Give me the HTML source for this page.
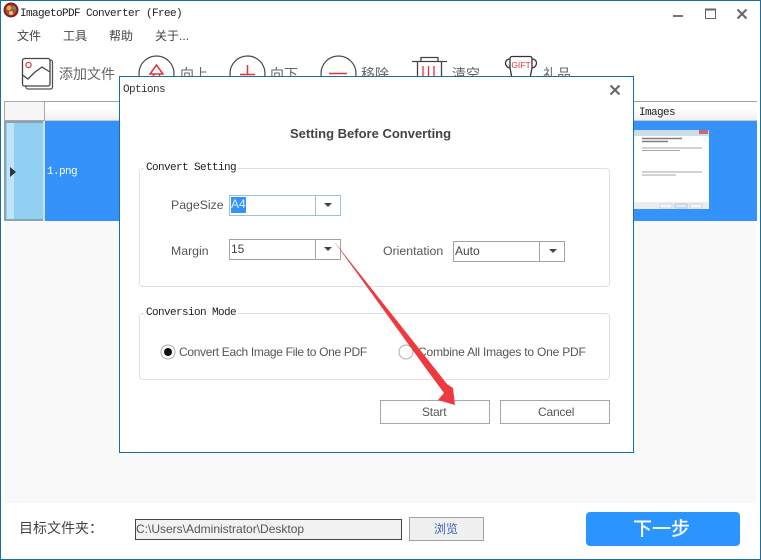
<!DOCTYPE html>
<html><head><meta charset="utf-8">
<style>
html,body{margin:0;padding:0;background:#fff}
#w{position:relative;width:761px;height:560px;overflow:hidden;background:#fff;font-family:"Liberation Sans","Noto Sans CJK SC",sans-serif;color:#555}
#w div,#w svg{position:absolute;box-sizing:border-box}
.t{white-space:nowrap;line-height:1}
.m{font-family:"Liberation Mono","Noto Sans CJK SC",monospace;font-size:11px;letter-spacing:-.6px;color:#222}
.c{font-size:12px;color:#444}
.box{background:#fff;border:1px solid #a3a3a3}
</style></head><body><div id="w">

<!-- window border -->
<div style="left:0;top:0;width:761px;height:560px;border:1px solid #1a6ea8;z-index:9;pointer-events:none"></div>

<!-- logo -->
<svg style="left:3px;top:2px" width="16" height="16" viewBox="0 0 16 16"><circle cx="8" cy="8" r="7.5" fill="#7c1f2a"/><circle cx="8" cy="8" r="5.5" fill="#c8402f"/><circle cx="6" cy="6" r="2.4" fill="#e3b13c"/><circle cx="11" cy="6" r="1.8" fill="#4f9e58"/><circle cx="8" cy="11" r="2" fill="#e7d16a"/><circle cx="4.500" cy="10" r="1.300" fill="#3f6cb0"/></svg>
<div class="t m" style="left:20px;top:9px">ImagetoPDF Converter (Free)</div>

<!-- window controls -->
<svg style="left:670px;top:6px" width="82" height="16" viewBox="0 0 82 16"><path d="M3 10H13" stroke="#777" stroke-width="2"/><rect x="35.500" y="3.500" width="10" height="9" fill="none" stroke="#666"/><path d="M35 3.500H46" stroke="#666" stroke-width="2"/><path d="M67.500 3.500L76.500 12.500M76.500 3.500L67.500 12.500" stroke="#666" stroke-width="2"/></svg>

<!-- menu -->
<div class="t" style="left:17px;top:30px;font-size:12px;color:#444">文件</div>
<div class="t" style="left:63px;top:30px;font-size:12px;color:#444">工具</div>
<div class="t" style="left:109px;top:30px;font-size:12px;color:#444">帮助</div>
<div class="t" style="left:155px;top:30px;font-size:12px;color:#444">关于...</div>

<!-- toolbar -->
<svg style="left:20px;top:56px" width="36" height="36" viewBox="0 0 36 36" fill="none"><rect x="6" y="4" width="26.500" height="29" rx="2" stroke="#555" stroke-width="1.300"/><rect x="2.500" y="2.500" width="27.500" height="27.500" rx="2" fill="#fff" stroke="#444" stroke-width="1.300"/><circle cx="8.500" cy="9" r="2.600" stroke="#d9363e" stroke-width="1.200"/><path d="M2.500 19L8 23L15 16L22 11L30 16" stroke="#444" stroke-width="1.300"/></svg>
<div class="t" style="left:59px;top:67px;font-size:14px;color:#666">添加文件</div>

<svg style="left:137px;top:54px" width="40" height="40" viewBox="0 0 40 40" fill="none"><circle cx="19.500" cy="19.500" r="17.500" stroke="#444" stroke-width="1.200"/><path d="M19.500 11L13 20H26Z" stroke="#e0323c" stroke-width="1.500"/><path d="M16.500 20V28H22.500V20" stroke="#e0323c" stroke-width="1.500"/></svg>
<div class="t" style="left:180px;top:67px;font-size:14px;color:#666">向上</div>

<svg style="left:228px;top:54px" width="40" height="40" viewBox="0 0 40 40" fill="none"><circle cx="19.500" cy="19.500" r="17.500" stroke="#444" stroke-width="1.200"/><path d="M19.500 11V20M12 20.500H27" stroke="#e0323c" stroke-width="1.500"/></svg>
<div class="t" style="left:270px;top:67px;font-size:14px;color:#666">向下</div>

<svg style="left:319px;top:54px" width="40" height="40" viewBox="0 0 40 40" fill="none"><circle cx="19.500" cy="19.500" r="17.500" stroke="#444" stroke-width="1.200"/><path d="M10 19.500H28" stroke="#e0323c" stroke-width="1.500"/></svg>
<div class="t" style="left:361px;top:67px;font-size:14px;color:#666">移除</div>

<svg style="left:410px;top:54px" width="40" height="24" viewBox="0 0 40 24" fill="none"><path d="M2 7.500H37" stroke="#444" stroke-width="1.300"/><path d="M11 7V3.500H28V7" stroke="#444" stroke-width="1.300"/><path d="M7.500 8V24M31.500 8V24" stroke="#444" stroke-width="1.300"/><path d="M13 12V24M18.500 12V24M24 12V24" stroke="#e0323c" stroke-width="1.300"/></svg>
<div class="t" style="left:452px;top:67px;font-size:14px;color:#666">清空</div>

<svg style="left:503px;top:54px" width="36" height="24" viewBox="0 0 36 24" fill="none"><path d="M9 2.500H27Q29 2.500 29 5V14L27 24H9L7 14V5Q7 2.500 9 2.500Z" fill="#fff" stroke="#333" stroke-width="1.300"/><path d="M7 5C1 5 1 13 7 14M29 5C35 5 35 13 29 14" stroke="#333" stroke-width="1.300"/><text x="18" y="14" font-family="Liberation Sans" font-size="8.500" fill="#e0323c" text-anchor="middle">GIFT</text></svg>
<div class="t" style="left:543px;top:67px;font-size:14px;color:#666">礼品</div>

<!-- grid -->
<div style="left:4px;top:101px;width:753px;height:402px;background:#f9f9f9"></div>
<div style="left:4px;top:101px;width:753px;height:20px;background:linear-gradient(#fff,#fff 35%,#f0f0f0);border-top:1px solid #a0a0a0;border-bottom:1px solid #c8c8c8"></div>
<div style="left:4px;top:101px;width:41px;height:20px;background:#f6f6f6;border:1px solid #a8a8a8"></div>
<div class="t m" style="left:639px;top:108px">Images</div>
<div style="left:44px;top:121px;width:713px;height:100px;background:#3393fb"></div>
<div style="left:4px;top:121px;width:40px;height:100px;background:#8fd0f3;border:2px solid #8aa3b3;border-width:2px 1px 2px 2px"></div>
<div style="left:7px;top:123px;width:7px;height:96px;background:#bfe4f9"></div>
<div style="left:43px;top:121px;width:2px;height:100px;background:#cde0ee"></div>
<svg style="left:9px;top:166px" width="8" height="12" viewBox="0 0 8 12"><path d="M1 1L7 6L1 11Z" fill="#333"/></svg>
<div class="t m" style="left:47px;top:167px;color:#fff">1.png</div>

<!-- thumbnail -->
<svg style="left:630px;top:129px" width="80" height="81" viewBox="0 0 80 81"><rect x="0" y="1" width="79" height="79" fill="#fff"/><rect x="0" y="1" width="79" height="6" fill="#cfdcea"/><rect x="69" y="1" width="9" height="4" fill="#c76a70"/><rect x="0" y="73" width="79" height="7" fill="#ececec"/><path d="M12 9.500H52M12 12.500H38" stroke="#555" stroke-width="1.400" opacity=".75"/><path d="M12 19H72M12 21.500H50M12 43H72M12 46H46" stroke="#888" stroke-width="1" opacity=".75"/><rect x="30" y="75" width="12" height="4" fill="#f5f5f5" stroke="#bbb" stroke-width=".5"/><rect x="45" y="75" width="12" height="4" fill="#e4edf6" stroke="#7a9cc0" stroke-width=".5"/><rect x="60" y="75" width="12" height="4" fill="#f5f5f5" stroke="#bbb" stroke-width=".5"/></svg>

<!-- bottom bar -->
<div class="t" style="left:19px;top:521px;font-size:14px;color:#444">目标文件夹：</div>
<div style="left:135px;top:519px;width:267px;height:21px;background:#f2f2f2;border:1px solid #444"></div>
<div class="t" style="left:136px;top:523px;font-size:12px;color:#555">C:\Users\Administrator\Desktop</div>
<div style="left:409px;top:517px;width:75px;height:24px;background:#f0f0f0;border:1px solid #a0a0a0"></div>
<div class="t" style="left:434px;top:523px;font-size:12px;color:#3a62b5">浏览</div>
<div style="left:586px;top:512px;width:154px;height:34px;background:#2b95ff;border-radius:4px"></div>
<div class="t" style="left:633px;top:520px;font-size:19px;font-weight:500;color:#fff">下一步</div>

<!-- dialog -->
<div style="left:119px;top:76px;width:515px;height:377px;background:#fff;border:1px solid #1a6ea8"></div>
<div class="t m" style="left:123px;top:85px;color:#333">Options</div>
<svg style="left:608px;top:83px" width="14" height="14" viewBox="0 0 14 14"><path d="M2.500 2.500L11.500 11.500M11.500 2.500L2.500 11.500" stroke="#666" stroke-width="2"/></svg>
<div class="t" style="left:290px;top:127px;font-size:13px;font-weight:bold;color:#444">Setting Before Converting</div>

<!-- group 1 -->
<div style="left:139px;top:168px;width:471px;height:119px;border:1px solid #dbe1e4;border-radius:4px"></div>
<div class="t m" style="left:144px;top:162px;background:#fff;padding:0 2px;height:12px;line-height:12px">Convert Setting</div>
<div class="t" style="left:171px;top:199px;font-size:12.300px;color:#555">PageSize</div>
<div class="t" style="left:171px;top:245px;font-size:12.300px;color:#555">Margin</div>
<div class="t" style="left:383px;top:245px;font-size:12.300px;color:#555">Orientation</div>

<div class="box" style="left:229px;top:195px;width:112px;height:21px;border-color:#9cc0d4"></div>
<div style="left:315px;top:195px;width:1px;height:21px;background:#9cc0d4"></div>
<div style="left:231px;top:197px;width:15px;height:16px;background:#3393fb"></div>
<div class="t c" style="left:231px;top:198px;color:#dfefff">A4</div>
<div class="box" style="left:229px;top:239px;width:112px;height:21px"></div>
<div style="left:315px;top:239px;width:1px;height:21px;background:#a3a3a3"></div>
<div class="t c" style="left:231px;top:243px">15</div>
<div class="box" style="left:453px;top:241px;width:112px;height:21px"></div>
<div style="left:539px;top:241px;width:1px;height:21px;background:#a3a3a3"></div>
<div class="t c" style="left:455px;top:245px">Auto</div>
<svg style="left:323px;top:202px" width="10" height="6"><path d="M1 1H9L5 5Z" fill="#444"/></svg>
<svg style="left:323px;top:246px" width="10" height="6"><path d="M1 1H9L5 5Z" fill="#444"/></svg>
<svg style="left:548px;top:248px" width="10" height="6"><path d="M1 1H9L5 5Z" fill="#444"/></svg>

<!-- group 2 -->
<div style="left:139px;top:313px;width:471px;height:67px;border:1px solid #dbe1e4;border-radius:4px"></div>
<div class="t m" style="left:144px;top:307px;background:#fff;padding:0 2px;height:12px;line-height:12px">Conversion Mode</div>
<svg style="left:159px;top:343px" width="18" height="18"><circle cx="9" cy="9" r="7" fill="#fff" stroke="#aaa"/><circle cx="9" cy="9" r="4" fill="#111"/></svg>
<div class="t" style="left:179px;top:346px;font-size:12px;letter-spacing:-.32px;color:#555">Convert Each Image File to One PDF</div>
<svg style="left:397px;top:343px" width="18" height="18"><circle cx="9" cy="9" r="7" fill="#fff" stroke="#aaa"/></svg>
<div class="t" style="left:418px;top:346px;font-size:12px;letter-spacing:-.2px;color:#555">Combine All Images to One PDF</div>

<!-- buttons -->
<div style="left:380px;top:400px;width:110px;height:24px;border:1px solid #a8a8a8;background:#fff"></div>
<div class="t" style="left:422px;top:406px;font-size:12px;letter-spacing:-.2px;color:#555">Start</div>
<div style="left:500px;top:400px;width:110px;height:24px;border:1px solid #a8a8a8;background:#fff"></div>
<div class="t" style="left:538px;top:406px;font-size:12px;letter-spacing:-.2px;color:#555">Cancel</div>

<!-- arrow -->
<svg style="left:0;top:0;z-index:5" width="761" height="560"><path d="M333 240L436 370L447 384L453 388L455 405L438 400L444 393L427 370Z" fill="#ee3a3f"/></svg>

</div></body></html>
